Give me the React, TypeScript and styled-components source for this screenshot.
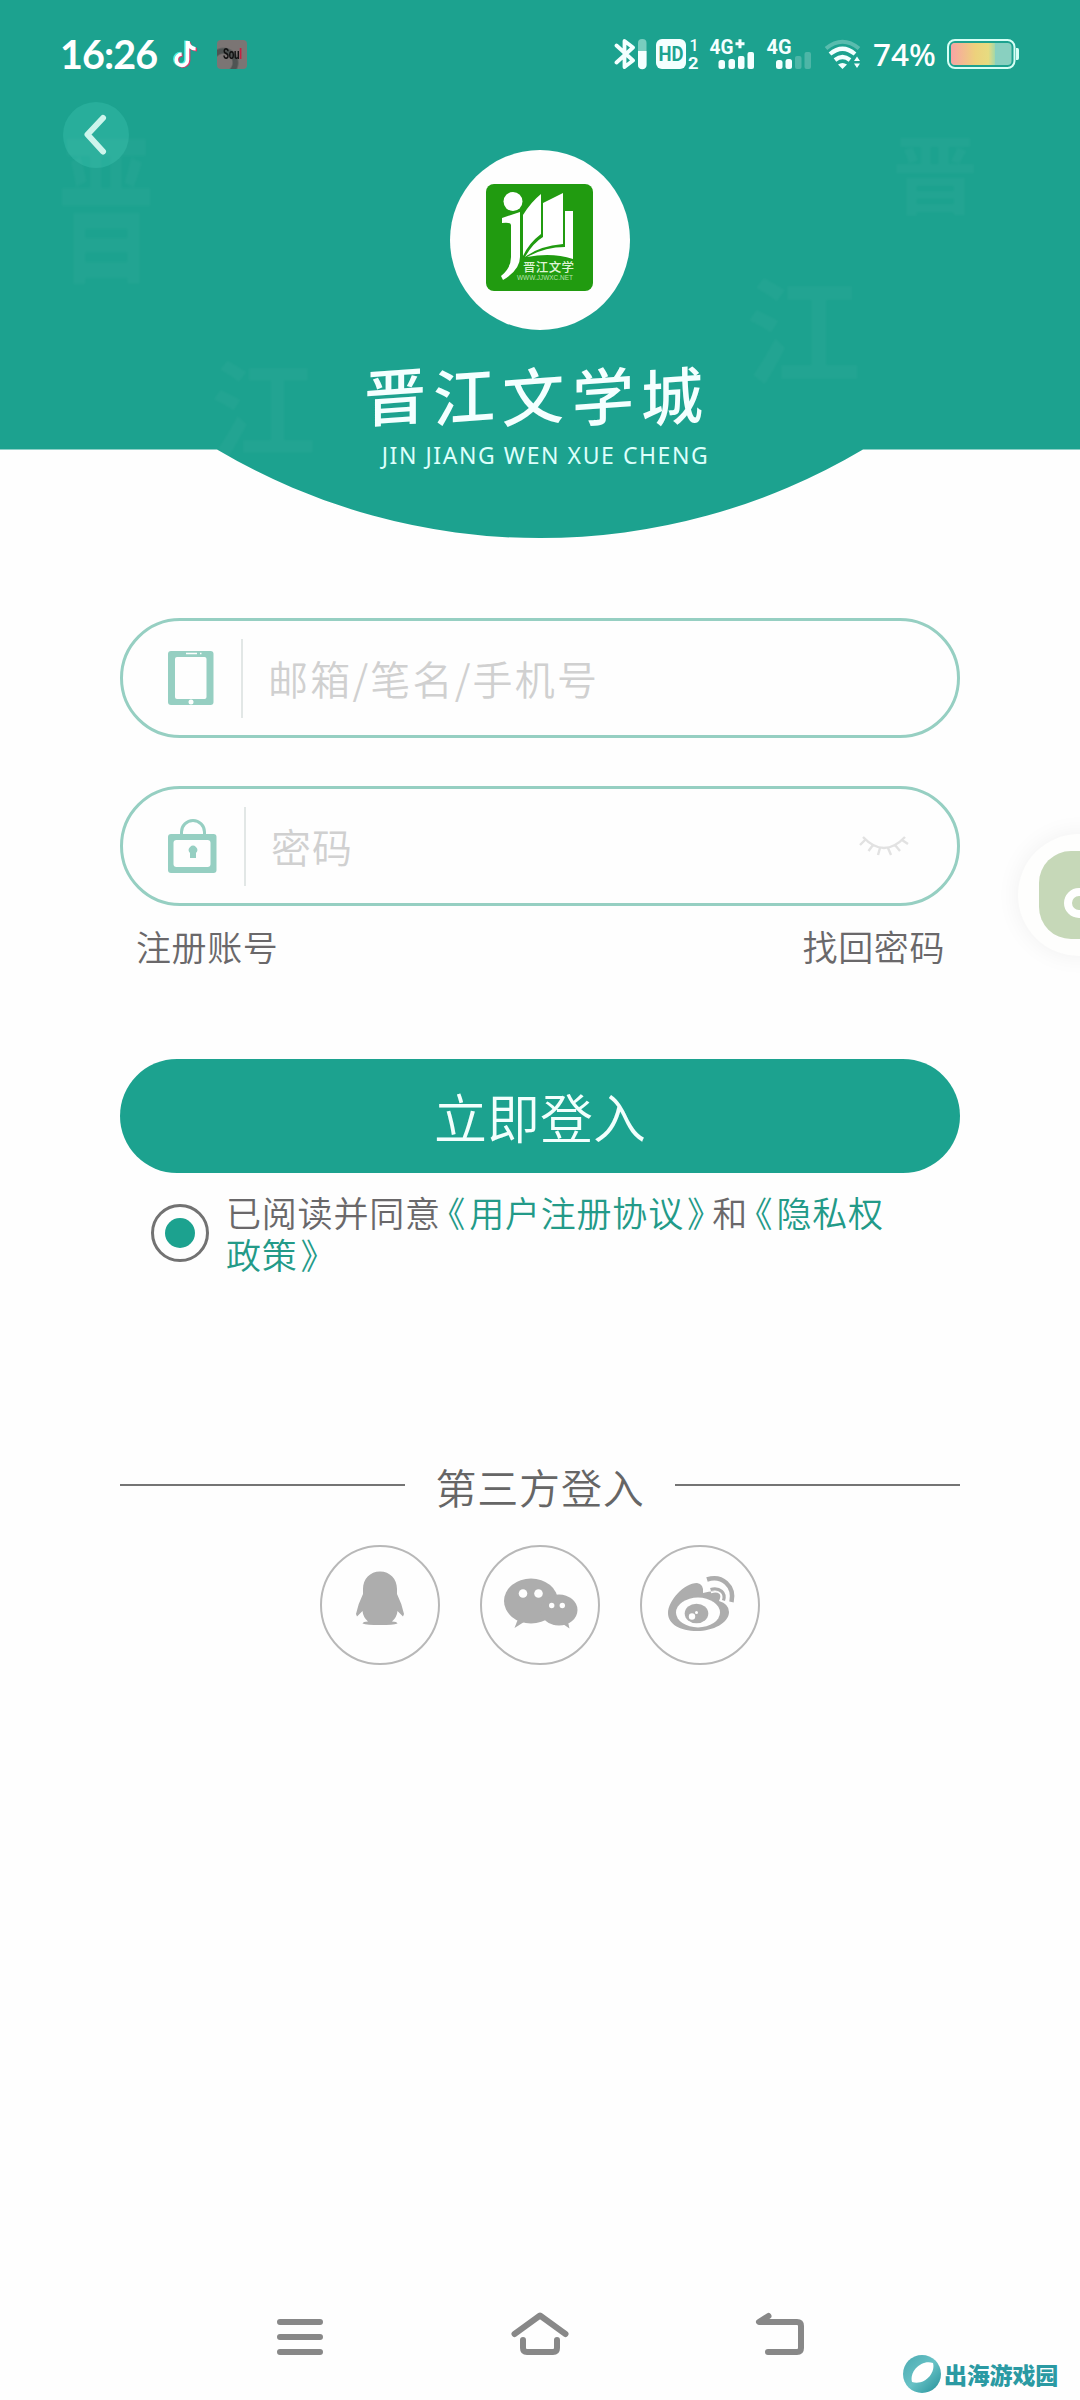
import React from "react";
import styled, { createGlobalStyle } from "styled-components";

const teal = "#1ca28f";
const mint = "#96cfc2";
const grey = "#6a686a";
const cjk = '"Noto Sans CJK SC", sans-serif';

const GlobalStyle = createGlobalStyle`
  *, *::before, *::after { box-sizing: border-box; }
  body { margin: 0; background: #fefefe; }
  button { border: 0; padding: 0; background: none; font: inherit; color: inherit; }
`;

const Screen = styled.div`
  position: relative;
  display: flex;
  flex-direction: column;
  width: 1080px;
  height: 2400px;
  overflow: hidden;
  background: #fefefe;
  font-family: ${cjk};
  color: ${grey};
`;

const Header = styled.header`
  position: relative;
  display: flex;
  flex-direction: column;
  height: 539px;
  background: ${teal};
  clip-path: path("M0 0H1080V449.500H863A633 633 0 0 1 217 449.500H0Z");
`;

const Ghost = styled.span<{ $x: number; $y: number; $size: number; $stretch?: number }>`
  position: absolute;
  left: ${(p) => p.$x}px;
  top: ${(p) => p.$y}px;
  font-size: ${(p) => p.$size}px;
  font-weight: 700;
  line-height: 1;
  color: rgba(255, 255, 255, 0.026);
  transform: scaleY(${(p) => p.$stretch ?? 1});
  transform-origin: top;
  filter: blur(1px);
`;

const StatusBar = styled.div`
  display: flex;
  align-items: center;
  justify-content: space-between;
  height: 102px;
  padding: 6px 60px 0 60px;
  color: #fff;
`;

const StatusGroup = styled.div`
  display: flex;
  align-items: center;
`;

const Clock = styled.span`
  width: 113px;
  font: 700 39.500px/44px Lato, sans-serif;
  letter-spacing: -0.9px;
  white-space: nowrap;
`;

const SoulBadge = styled.span`
  display: flex;
  align-items: center;
  justify-content: center;
  width: 30px;
  height: 29px;
  margin-left: 19px;
  border-radius: 4px;
  background: radial-gradient(circle at 22% 78%, #7b7574 0 25%, #4f5453 30% 42%, #7b7574 48%);
`;

const SoulText = styled.span`
  font: 700 14px/1 Roboto, sans-serif;
  letter-spacing: -0.4px;
  color: #111;
  transform: scaleX(0.7);
`;

const SoulRed = styled.b`
  color: #c22342;
`;

const Percent = styled.span`
  width: 76px;
  padding-left: 2px;
  font: 500 31.500px/46px "Noto Sans", sans-serif;
  white-space: nowrap;
`;

const BackButton = styled.button`
  display: flex;
  align-items: center;
  justify-content: center;
  width: 66px;
  height: 66px;
  margin-left: 63px;
  border-radius: 50%;
  background: #28ae9b;
`;

const Brand = styled.div`
  display: flex;
  flex-direction: column;
  align-items: center;
  margin-top: -18px;
`;

const Logo = styled.div`
  display: flex;
  align-items: center;
  justify-content: center;
  width: 180px;
  height: 180px;
  padding-bottom: 5px;
  border-radius: 50%;
  background: #fefefe;
`;

const BrandName = styled.h1`
  display: flex;
  gap: 7px;
  margin: 21px 13px 0 0;
  font-size: 62px;
  font-weight: 500;
  line-height: 84px;
  color: #f4ffff;
`;

const BrandGlyph = styled.span`
  transform: skew(0deg, -4deg);
`;

const BrandLatin = styled.p`
  margin: 5px 0 0 11px;
  font: 400 23px/30px "Noto Sans", sans-serif;
  letter-spacing: 1.55px;
  white-space: nowrap;
  color: #dcfffb;
`;

const Form = styled.main`
  display: flex;
  flex-direction: column;
  width: 840px;
  margin: 79px auto 0;
`;

const Field = styled.label`
  display: flex;
  align-items: center;
  height: 120px;
  padding: 0 45px;
  border: 3px solid ${mint};
  border-radius: 60px;
  background: #fefefe;

  & + & {
    margin-top: 48px;
  }
`;

const Divider = styled.span<{ $gap: number }>`
  width: 2px;
  height: 79px;
  margin: 0 25px 0 ${(p) => p.$gap}px;
  background: #e2e7e6;
`;

const Placeholder = styled.span<{ $spacing?: number }>`
  flex: 1;
  font-size: 40px;
  font-weight: 350;
  line-height: 60px;
  letter-spacing: ${(p) => p.$spacing ?? 1}px;
  white-space: nowrap;
  color: #d0d0d0;
`;

const Links = styled.div`
  display: flex;
  justify-content: space-between;
  padding: 13px 15px 0 16px;
  font-size: 35px;
  font-weight: 350;
  line-height: 53px;
  letter-spacing: 0.6px;
`;

const Submit = styled.button`
  height: 114px;
  margin-top: 87px;
  border-radius: 57px;
  background: ${teal};
  font-size: 53px;
  font-weight: 350;
  line-height: 114px;
  color: #f2fffd;
`;

const Agreement = styled.div`
  display: flex;
  align-items: center;
  gap: 17px;
  margin-top: 18px;
  padding-left: 31px;
`;

const Radio = styled.span`
  display: flex;
  align-items: center;
  justify-content: center;
  width: 58px;
  height: 58px;
  border: 3px solid #727272;
  border-radius: 50%;

  &::after {
    content: "";
    width: 30px;
    height: 30px;
    border-radius: 50%;
    background: ${teal};
  }
`;

const Terms = styled.p`
  margin: 0;
  font-size: 35px;
  font-weight: 350;
  line-height: 42px;
  letter-spacing: 0.8px;
  white-space: nowrap;
`;

const TermsLink = styled.span`
  color: #239a88;
`;

const Open = styled.span`
  padding: 0 3px 0 7px;
  font-feature-settings: "halt";
`;

const Close = styled.span`
  padding: 0 7px 0 3px;
  font-feature-settings: "halt";
`;

const ThirdParty = styled.section`
  display: flex;
  flex-direction: column;
  align-items: center;
  margin-top: 180px;
`;

const Rule = styled.div`
  display: flex;
  align-items: center;
  justify-content: space-between;
  width: 100%;
  height: 62px;
  font-size: 41px;
  font-weight: 350;
  line-height: 60px;
  letter-spacing: 0.8px;
  color: #666;

  &::before,
  &::after {
    content: "";
    width: 285px;
    height: 2px;
    margin-bottom: 3px;
    background: #747474;
  }
`;

const Providers = styled.div`
  display: flex;
  gap: 40px;
  margin-top: 28px;
`;

const Provider = styled.button`
  display: flex;
  width: 120px;
  height: 120px;
  border: 2px solid #b8b8b8;
  border-radius: 50%;
`;

const NavBar = styled.nav`
  display: flex;
  justify-content: center;
  gap: 180px;
  height: 60px;
  margin-top: auto;
  margin-bottom: 36px;
`;

const FloatingBall = styled.div`
  position: absolute;
  left: 1018px;
  top: 834px;
  width: 122px;
  height: 122px;
  padding: 17px 0 0 21px;
  border-radius: 50%;
  background: #fefefd;
  box-shadow: 0 0 24px rgba(0, 0, 0, 0.06);
`;

const BallFace = styled.div`
  width: 88px;
  height: 88px;
  padding: 37px 0 0 25px;
  border-radius: 32px;
  background: #c6d8b8;
`;

const BallRing = styled.div`
  width: 30px;
  height: 30px;
  border: 8px solid #fff;
  border-radius: 50%;
`;

const Watermark = styled.div`
  position: absolute;
  left: 902px;
  top: 2354px;
  display: flex;
  align-items: center;
  gap: 2px;
  height: 40px;
  font-size: 23px;
  font-weight: 900;
  line-height: 38px;
  letter-spacing: -0.2px;
  white-space: nowrap;
  color: #2b9aa3;
`;

const NoteIcon = () => (
  <svg width="25" height="30" viewBox="0 0 26 30" fill="none" strokeWidth="3.800">
    <path d="M13.500 1V20.500A5.800 5.800 0 1 1 7.800 14.500M14 2Q16 8.500 22 8.500" stroke="#48eee5" />
    <path d="M16.200 2.500V22A5.800 5.800 0 1 1 10 16M16.500 3.500Q18 10.500 25 10.500" stroke="#d93b6b" />
    <path d="M15 1.500V21A5.800 5.800 0 1 1 9 15.200M15.200 2Q17 9.500 23.500 9.500" stroke="#fff" />
  </svg>
);

// Bluetooth, HD voice, the two SIM signals and Wi-Fi, drawn on one strip
const SignalIcons = () => (
  <svg width="257" height="34" viewBox="614 37 257 34" fill="none" stroke="#f4ffff">
    <path d="M616.500 45.500L633 60.500L624.500 67V41L633 47.500L616.500 62.500" strokeWidth="3.800" strokeLinejoin="round" strokeLinecap="round" />
    <rect x="638" y="39" width="8.500" height="30" rx="4" fill="#79cdbf" stroke="none" />
    <path d="M638 51H646.500V65A4.200 4.200 0 0 1 638 65Z" fill="#f4ffff" stroke="none" />
    <rect x="656" y="39" width="30" height="30" rx="6" fill="#f4ffff" stroke="none" />
    <g fill="#f4ffff" stroke="none" fontFamily="Roboto, sans-serif" fontWeight="700">
      <text x="658.500" y="61" fontSize="20" fill={teal} textLength="25" lengthAdjust="spacingAndGlyphs">HD</text>
      <text x="689.500" y="51" fontSize="16" fontWeight="500">1</text>
      <text x="688" y="68.500" fontSize="16" textLength="10.500" lengthAdjust="spacingAndGlyphs">2</text>
      <text x="709.500" y="53.500" fontSize="19.500" textLength="24" lengthAdjust="spacingAndGlyphs">4G</text>
      <text x="766.500" y="53.500" fontSize="19.500" textLength="25" lengthAdjust="spacingAndGlyphs">4G</text>
    </g>
    <path d="M735.500 43.800H744.500M740 39.300V48.300" strokeWidth="3" />
    <g fill="#f4ffff" stroke="none">
      <rect x="718.500" y="60" width="6.500" height="9" rx="2.500" />
      <rect x="728.500" y="59" width="6.500" height="10" rx="2.500" />
      <rect x="738" y="56" width="6.500" height="13" rx="2" />
      <rect x="747.500" y="52" width="6.500" height="17" rx="2" />
      <rect x="776" y="60" width="6.500" height="9" rx="2.500" />
      <rect x="785.500" y="59" width="6.500" height="10" rx="2.500" />
    </g>
    <g fill="#4db6a7" stroke="none">
      <rect x="795" y="56" width="6.500" height="13" rx="2" />
      <rect x="804.500" y="52" width="6.500" height="17" rx="2" />
    </g>
    <path d="M826 48.500Q842.500 35 859 48.500" stroke="#59bcae" strokeWidth="4" />
    <path d="M830 54Q842.500 43.500 855 54M835 60Q842.500 54 850 60" strokeWidth="4.200" />
    <path d="M838 64.500Q842.500 61.500 847 64.500L842.500 69Z" fill="#f4ffff" stroke="none" />
    <path d="M854 61L857 56.500L860 61ZM854 63.500L857 68L860 63.500Z" fill="#f4ffff" stroke="none" />
  </svg>
);

const BatteryIcon = () => (
  <svg width="73" height="30" viewBox="0 0 73 30">
    <defs>
      <linearGradient id="charge">
        <stop offset="0" stopColor="#f8a4a4" />
        <stop offset="0.550" stopColor="#edd17c" />
        <stop offset="0.850" stopColor="#e7db80" />
        <stop offset="1" stopColor="#a3d8a8" />
      </linearGradient>
    </defs>
    <rect x="1" y="1" width="66.500" height="28" rx="7" fill="none" stroke="#d6fff5" strokeWidth="2" />
    <rect x="4" y="4" width="60.500" height="22" rx="4" fill="#89d0c0" />
    <path d="M8 4H48V26H8A4 4 0 0 1 4 22V8A4 4 0 0 1 8 4Z" fill="url(#charge)" />
    <path d="M69 9H70.500Q72 9 72 11V19Q72 21 70.500 21H69Z" fill="#d6fff5" />
  </svg>
);

const BookLogo = () => (
  <svg width="108" height="108" viewBox="0 0 108 108">
    <rect width="107" height="107" rx="8" fill="#219b10" />
    <g fill="#fff">
      <circle cx="27" cy="17.500" r="9.500" />
      <path d="M16 34L34 28V73Q34 86 17 96L15 92Q25 84 25 73V41Q25 38 16 39Z" />
      <path d="M37 31Q45 18 55 10V50Q43 59 37 72Z" />
      <path d="M57 19L77 9V60Q53 62 39 73Q47 59 57 53Z" />
      <path d="M79 27H87V75Q66 68 41 73Q59 63 79 63Z" />
      <text x="37" y="88" fontFamily={cjk} fontSize="12.500" fontWeight="500" fill="#dff5d6" textLength="51">晋江文学</text>
      <text x="31" y="96" fontFamily="Liberation Sans, sans-serif" fontSize="6.500" fill="#b8e3ac" textLength="56" lengthAdjust="spacingAndGlyphs">WWW.JJWXC.NET</text>
    </g>
  </svg>
);

const TabletIcon = () => (
  <svg width="46" height="54" viewBox="0 0 46 54">
    <rect width="45.500" height="54" rx="3" fill={mint} />
    <rect x="7" y="6" width="31.500" height="42" rx="2" fill="#fefefe" />
    <path d="M18 2.500H29M32 2.500H33.500" stroke="#fefefe" strokeWidth="1.500" />
    <circle cx="23" cy="51" r="2.500" fill="#fefefe" />
  </svg>
);

const LockIcon = () => (
  <svg width="49" height="54" viewBox="0 0 49 54">
    <path d="M13.500 17V13A11.500 11.500 0 0 1 36.500 13V17" fill="none" stroke={mint} strokeWidth="3" />
    <rect y="15" width="48.500" height="39" rx="3" fill={mint} />
    <rect x="5.500" y="21" width="37" height="27" rx="3" fill="#fefefe" />
    <path d="M22 39V34A4.200 4.200 0 1 1 28 34V39Z" fill={mint} />
  </svg>
);

const ClosedEye = styled.svg`
  margin-right: 3px;
`;

const ClosedEyeIcon = () => (
  <ClosedEye width="50" height="22" viewBox="0 0 50 22" fill="none" stroke="#e2e2e2" strokeWidth="2.400">
    <path d="M4 2Q25 24 46 2M6 5L1 10M14 10L9.500 16M21 13L19 20M29 13L32 20M36 10L41 16M43 5L49 9" />
  </ClosedEye>
);

const QQIcon = () => (
  <svg width="116" height="116" viewBox="2 2 116 116" fill="#adadad">
    <path d="M60 26.500C70 26.500 77 34 77 44V49Q82 59 84 69L83 71.500L77.500 66Q77 72 72 76.500Q77 76.500 77.500 78.500Q73 80 60 80Q47 80 42.500 78.500Q43 76.500 48 76.500Q43 72 42.500 66L37 71.500L36 69Q38 59 43 49V44C43 34 50 26.500 60 26.500Z" />
  </svg>
);

const WechatIcon = () => (
  <svg width="116" height="116" viewBox="2 2 116 116" fill="#adadad">
    <ellipse cx="51" cy="56" rx="27" ry="22.500" />
    <path d="M38 74L34.500 83L44 77Z" />
    <ellipse cx="79" cy="65" rx="18.500" ry="15.500" />
    <path d="M83 79L89.500 83.500L88 77Z" />
    <g fill="#fefefe">
      <circle cx="43" cy="48.500" r="4.300" />
      <circle cx="58.500" cy="48.500" r="4.300" />
      <circle cx="71.700" cy="60.500" r="2.700" />
      <circle cx="82.300" cy="60.500" r="2.700" />
    </g>
  </svg>
);

const WeiboIcon = () => (
  <svg width="116" height="116" viewBox="2 2 116 116" fill="#adadad">
    <path d="M28 68C28 56 44 38 57 38Q64 39 63 48Q73 45 79 47Q82 50 79 56Q89 59 89 67C89 78 73 86 57 86C40 86 28 79 28 68Z" />
    <ellipse cx="58" cy="67.500" rx="22" ry="15" fill="#fefefe" />
    <ellipse cx="56.500" cy="68.500" rx="11.800" ry="9.800" />
    <circle cx="52" cy="71.500" r="3.200" fill="#fefefe" />
    <circle cx="56.500" cy="67.500" r="1.500" fill="#fefefe" />
    <path d="M67 34.500C82 29.500 95 41 91.500 57" fill="none" stroke="#adadad" strokeWidth="4.500" />
    <path d="M71 47.500C79 45 83 49 81 55.500" fill="none" stroke="#fefefe" strokeWidth="1.500" />
    <path d="M70.500 44.500C80 42 86 48 83.500 55.500" fill="none" stroke="#adadad" strokeWidth="3.200" />
  </svg>
);

const NavIcon = ({ d }: { d: string }) => (
  <svg width="60" height="60" viewBox="0 0 60 60" fill="none" stroke="#888" strokeWidth="6" strokeLinecap="round" strokeLinejoin="round">
    <path d={d} />
  </svg>
);

const SwirlLogo = () => (
  <svg width="40" height="40" viewBox="0 0 40 40">
    <defs>
      <linearGradient id="swirl" x1="0" y1="0" x2="1" y2="1">
        <stop offset="0" stopColor="#4aa9b0" />
        <stop offset="0.500" stopColor="#68c2c6" />
        <stop offset="1" stopColor="#238f98" />
      </linearGradient>
    </defs>
    <circle cx="20" cy="20" r="19" fill="url(#swirl)" />
    <path d="M10 28C7 17 20 5 31 9C34 19 22 32 10 28Z" fill="#fff" />
  </svg>
);

export default function App() {
  return (
    <Screen>
      <GlobalStyle />
      <Header>
        <Ghost $x={57} $y={118} $size={98} $stretch={1.65}>晋</Ghost>
        <Ghost $x={210} $y={350} $size={106}>江</Ghost>
        <Ghost $x={892} $y={128} $size={86}>晋</Ghost>
        <Ghost $x={745} $y={266} $size={116}>江</Ghost>
        <StatusBar>
          <StatusGroup>
            <Clock>16:26</Clock>
            <NoteIcon />
            <SoulBadge><SoulText>Sou<SoulRed>l</SoulRed></SoulText></SoulBadge>
          </StatusGroup>
          <StatusGroup>
            <SignalIcons />
            <Percent>74%</Percent>
            <BatteryIcon />
          </StatusGroup>
        </StatusBar>
        <BackButton>
          <svg width="30" height="44" viewBox="0 0 30 44" fill="none" stroke="#ccf5ec" strokeWidth="6" strokeLinecap="round" strokeLinejoin="round">
            <path d="M22 5L6.500 21.500L22 38.500" />
          </svg>
        </BackButton>
        <Brand>
          <Logo><BookLogo /></Logo>
          <BrandName>
            {[..."晋江文学城"].map((glyph) => (
              <BrandGlyph key={glyph}>{glyph}</BrandGlyph>
            ))}
          </BrandName>
          <BrandLatin>JIN JIANG WEN XUE CHENG</BrandLatin>
        </Brand>
      </Header>

      <Form>
        <Field>
          <TabletIcon />
          <Divider $gap={27} />
          <Placeholder $spacing={2.2}>邮箱/笔名/手机号</Placeholder>
        </Field>
        <Field>
          <LockIcon />
          <Divider $gap={27} />
          <Placeholder>密码</Placeholder>
          <ClosedEyeIcon />
        </Field>
        <Links>
          <span>注册账号</span>
          <span>找回密码</span>
        </Links>
        <Submit>立即登入</Submit>
        <Agreement>
          <Radio />
          <Terms>
            已阅读并同意
            <TermsLink><Open>《</Open>用户注册协议<Close>》</Close></TermsLink>
            和
            <TermsLink><Open>《</Open>隐私权<br />政策<Close>》</Close></TermsLink>
          </Terms>
        </Agreement>
        <ThirdParty>
          <Rule>第三方登入</Rule>
          <Providers>
            <Provider><QQIcon /></Provider>
            <Provider><WechatIcon /></Provider>
            <Provider><WeiboIcon /></Provider>
          </Providers>
        </ThirdParty>
      </Form>

      <NavBar>
        <NavIcon d="M10 18H50M10 33H50M10 48H50" />
        <NavIcon d="M4.500 30L30 11.500L55.500 30M13 36V44Q13 48 17 48H43Q47 48 47 44V36" />
        <NavIcon d="M18.500 12L9 18H47Q51 18 51 22V44Q51 48 47 48H18" />
      </NavBar>

      <FloatingBall>
        <BallFace><BallRing /></BallFace>
      </FloatingBall>
      <Watermark>
        <SwirlLogo />
        出海游戏园
      </Watermark>
    </Screen>
  );
}
